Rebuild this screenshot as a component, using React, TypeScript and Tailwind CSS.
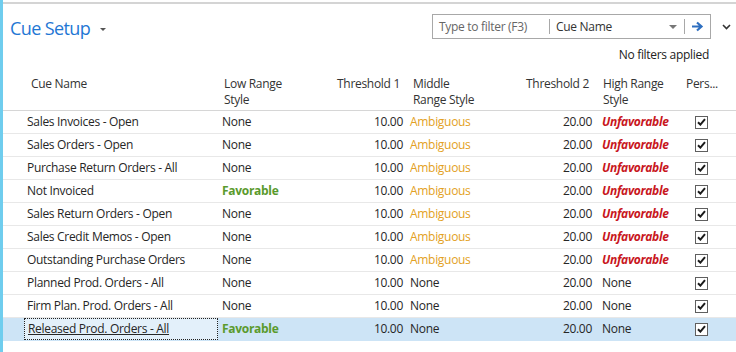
import React from 'react';

type Style = 'None' | 'Favorable' | 'Ambiguous' | 'Unfavorable';

const rows: { name: string; low: Style; mid: Style; high: Style }[] = [
  { name: 'Sales Invoices - Open', low: 'None', mid: 'Ambiguous', high: 'Unfavorable' },
  { name: 'Sales Orders - Open', low: 'None', mid: 'Ambiguous', high: 'Unfavorable' },
  { name: 'Purchase Return Orders - All', low: 'None', mid: 'Ambiguous', high: 'Unfavorable' },
  { name: 'Not Invoiced', low: 'Favorable', mid: 'Ambiguous', high: 'Unfavorable' },
  { name: 'Sales Return Orders - Open', low: 'None', mid: 'Ambiguous', high: 'Unfavorable' },
  { name: 'Sales Credit Memos - Open', low: 'None', mid: 'Ambiguous', high: 'Unfavorable' },
  { name: 'Outstanding Purchase Orders', low: 'None', mid: 'Ambiguous', high: 'Unfavorable' },
  { name: 'Planned Prod. Orders - All', low: 'None', mid: 'None', high: 'None' },
  { name: 'Firm Plan. Prod. Orders - All', low: 'None', mid: 'None', high: 'None' },
  { name: 'Released Prod. Orders - All', low: 'Favorable', mid: 'None', high: 'None' },
];

const StyleText = ({ value }: { value: Style }) => {
  if (value === 'Favorable') return <span className="font-bold text-[#5a9a2c]">Favorable</span>;
  if (value === 'Ambiguous') return <span className="text-[#e3a124]">Ambiguous</span>;
  if (value === 'Unfavorable')
    return <span className="font-bold italic text-[#c8161d]">Unfavorable</span>;
  return <span>None</span>;
};

const CheckBox = () => (
  <div className="w-[13px] h-[13px] border border-[#5f5f5f] bg-white flex items-center justify-center">
    <svg width="9" height="8" viewBox="0 0 9 8">
      <path d="M1 4.2 L3.4 6.6 L8 1.2" fill="none" stroke="#1a1a1a" strokeWidth="2" />
    </svg>
  </div>
);

export default function App() {
  return (
    <div
      className="w-[736px] h-[352px] bg-white overflow-hidden flex text-[12px] text-[#262626] tracking-[-0.3px]"
      style={{ fontFamily: '"Open Sans", "Noto Sans", sans-serif' }}
    >
      <div className="w-[3px] bg-[#6fcdee] shrink-0" />
      <div className="flex-1 flex flex-col">
        <div className="mt-[2px] h-[2px] border-t-2 border-[#d4d4d4]" />

        {/* Title bar */}
        <div className="flex items-start h-[58px]">
          <div className="flex items-center pl-[7px] pt-[15px]">
            <span className="text-[18px] leading-none text-[#1f77d4] tracking-[-0.6px]">Cue Setup</span>
            <span className="ml-[10px] mt-[2px] w-0 h-0 border-l-[3px] border-r-[3px] border-t-[3px] border-l-transparent border-r-transparent border-t-[#555]" />
          </div>
          <div className="ml-auto flex flex-col items-end">
            <div className="flex items-center mt-[10px]">
              <div className="w-[279px] h-[25px] border border-[#a8a8a8] flex items-center text-[12px]">
                <span className="pl-[6px] w-[116px] text-[#666]">Type to filter (F3)</span>
                <div className="w-px h-[15px] bg-[#a8a8a8]" />
                <span className="pl-[6px] text-[#333]">Cue Name</span>
                <span className="ml-auto mr-[7px] w-0 h-0 border-l-[4px] border-r-[4px] border-t-[4px] border-l-transparent border-r-transparent border-t-[#777]" />
                <div className="w-px h-[15px] bg-[#a8a8a8]" />
                <svg className="mx-[6px]" width="13" height="11" viewBox="0 0 13 11">
                  <path d="M1 5.5 H10 M6 1.5 L10.5 5.5 L6 9.5" fill="none" stroke="#2e6fc0" strokeWidth="2.2" />
                </svg>
              </div>
              <svg className="ml-[11px] mr-[5px]" width="9" height="6" viewBox="0 0 9 6">
                <path d="M1 1 L4.5 4.5 L8 1" fill="none" stroke="#333" strokeWidth="1.6" />
              </svg>
            </div>
            <div className="mt-[7px] mr-[27px] text-[#222]">No filters applied</div>
          </div>
        </div>

        {/* Header */}
        <div className="flex h-[49px] pt-[14px] border-b border-[#d6d6d6] leading-[16px] text-[#333]">
          <div className="w-[215px] pl-[28px]">Cue Name</div>
          <div className="w-[112px] pl-[6px]">Low Range<br />Style</div>
          <div className="w-[76px] text-right pr-[6px]">Threshold 1</div>
          <div className="w-[114px] pl-[7px]">Middle<br />Range Style</div>
          <div className="w-[76px] text-right pr-[7px]">Threshold 2</div>
          <div className="w-[84px] pl-[7px]">High Range<br />Style</div>
          <div className="pl-[6px]">Pers...</div>
        </div>

        {/* Rows */}
        {rows.map((r, i) => {
          const selected = i === rows.length - 1;
          return (
            <div
              key={i}
              className={`flex items-center h-[23px] border-b ${
                selected ? 'bg-[#cde4f6] border-[#cde4f6]' : 'border-[#e8e8e8]'
              }`}
            >
              <div className="w-[21px] shrink-0" />
              <div
                className={`w-[194px] h-full flex items-center pl-[3px] ${
                  selected ? 'bg-[#e3f0fa] border border-dotted border-[#222] underline pl-[2px]' : ''
                }`}
              >
                {r.name}
              </div>
              <div className="w-[112px] pl-[4px]">
                <StyleText value={r.low} />
              </div>
              <div className="w-[76px] text-right pr-[3px]">10.00</div>
              <div className="w-[114px] pl-[4px]">
                <StyleText value={r.mid} />
              </div>
              <div className="w-[76px] text-right pr-[4px]">20.00</div>
              <div className="w-[84px] pl-[6px]">
                <StyleText value={r.high} />
              </div>
              <div className="pl-[15px]">
                <CheckBox />
              </div>
            </div>
          );
        })}
      </div>
    </div>
  );
}
